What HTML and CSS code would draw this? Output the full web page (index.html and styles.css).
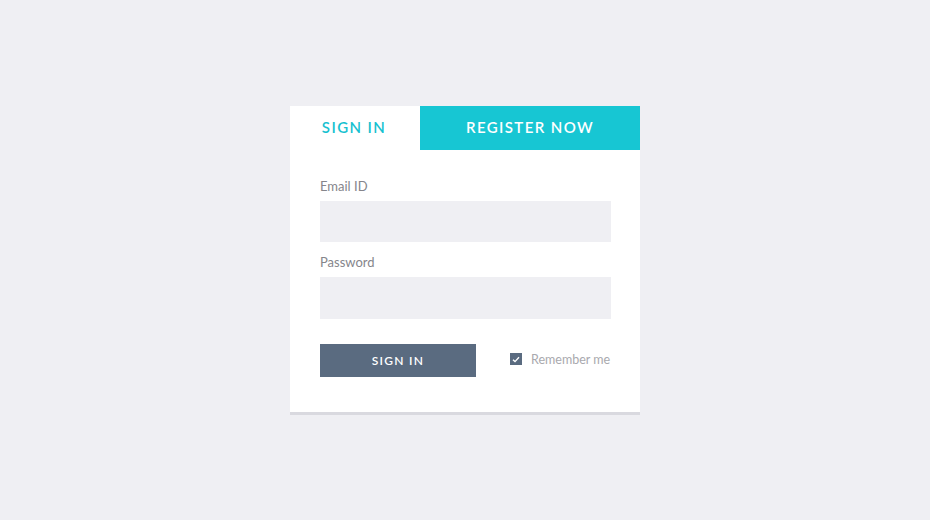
FILE: index.html
```html
<!DOCTYPE html>
<html>
<head>
<meta charset="utf-8">
<link rel="stylesheet" href="styles.css">
</head>
<body>
<div class="card">
  <div class="tabs">
    <div class="tab active">SIGN IN</div>
    <div class="tab other">REGISTER NOW</div>
  </div>
  <form class="form">
    <label class="label">Email ID</label>
    <div class="input"></div>
    <label class="label pw">Password</label>
    <div class="input tall"></div>
    <div class="actions">
      <button type="button" class="btn">SIGN IN</button>
      <div class="remember">
        <span class="check"><svg width="8" height="7" viewBox="0 0 8 7"><path d="M1 3.8 L3 5.6 L7 1.2" fill="none" stroke="#fff" stroke-width="1.4"/></svg></span>
        <span class="remember-text">Remember me</span>
      </div>
    </div>
  </form>
</div>
</body>
</html>
```
FILE: styles.css
```css
html, body {
  margin: 0;
  padding: 0;
}
body {
  background: #efeff3;
  font-family: "Lato", "Open Sans", sans-serif;
  width: 930px;
  height: 520px;
  padding-top: 106px;
  box-sizing: border-box;
}
.card {
  width: 350px;
  margin: 0 auto;
  background: #fff;
  border-bottom: 3px solid #d9d9df;
}
.tabs {
  display: flex;
  height: 44px;
}
.tab {
  display: flex;
  align-items: center;
  justify-content: center;
  font-size: 15px;
  letter-spacing: 1.4px;
  font-weight: 600;
  padding-bottom: 2px;
  box-sizing: border-box;
}
.tab.active {
  width: 130px;
  color: #17c1d0;
  padding-right: 2px;
}
.tab.other {
  flex: 1;
  background: #17c6d3;
  color: #fff;
}
.form {
  display: flex;
  flex-direction: column;
  padding: 28px 29px 35px 30px;
}
.label {
  font-size: 13px;
  color: #85858b;
  height: 17px;
  line-height: 17px;
  margin-bottom: 6px;
}
.label.pw {
  margin-top: 12px;
  margin-bottom: 6px;
}
.input {
  height: 41px;
  background: #efeff3;
}
.input.tall {
  height: 42px;
}
.actions {
  display: flex;
  align-items: center;
  margin-top: 25px;
}
.btn {
  flex: 0 0 156px;
  width: 156px;
  height: 33px;
  border: 0;
  background: #5a6b80;
  color: #fff;
  font-family: inherit;
  font-size: 12px;
  font-weight: 600;
  letter-spacing: 1.3px;
  padding: 0;
}
.remember {
  display: flex;
  align-items: center;
  margin-left: 34px;
  margin-top: -3px;
  white-space: nowrap;
}
.check {
  width: 12px;
  height: 12px;
  background: #5a6b80;
  display: flex;
  align-items: center;
  justify-content: center;
}
.remember-text {
  margin-left: 9px;
  font-size: 12.5px;
  color: #a9a9ae;
}
```
